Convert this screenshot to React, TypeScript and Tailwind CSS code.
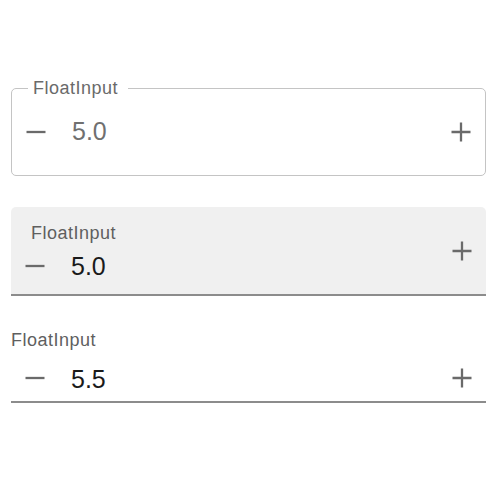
const font = { fontFamily: '"Liberation Sans", Arial, sans-serif' };

function MinusIcon() {
  return (
    <svg width="22" height="22" viewBox="0 0 22 22" className="shrink-0">
      <path d="M1.5 11h19" stroke="#6a6a6a" strokeWidth="2.3" />
    </svg>
  );
}

function PlusIcon() {
  return (
    <svg width="22" height="22" viewBox="0 0 22 22" className="shrink-0">
      <path d="M1.5 11h19M11 1.5v19" stroke="#6a6a6a" strokeWidth="2.3" />
    </svg>
  );
}

export default function App() {
  return (
    <div className="w-[500px] h-[500px] bg-white px-[11px] pt-[88px]" style={font}>
      <div className="w-[475px]">
        {/* Outlined */}
        <div className="relative h-[88px] rounded-[5px] border border-[#c4c4c4] flex items-center px-[13px]">
          <span className="absolute left-[16px] -top-[12px] bg-white pl-[5px] pr-[10px] text-[18px] leading-[22px] tracking-[0.5px] text-[#6a6a6a]">
            FloatInput
          </span>
          <MinusIcon />
          <span className="ml-[25px] text-[25px] text-[#707070]">5.0</span>
          <div className="flex-1" />
          <PlusIcon />
        </div>

        {/* Filled */}
        <div className="mt-[31px] h-[89px] rounded-t-[5px] bg-[#f0f0f0] border-b-2 border-[#8c8c8c] flex items-center px-[13px]">
          <div className="flex flex-col self-stretch pt-[15px]">
            <span className="ml-[7px] text-[18px] leading-[22px] tracking-[0.5px] text-[#5f5f5f]">FloatInput</span>
            <div className="flex items-center mt-[8px]">
              <MinusIcon />
              <span className="ml-[25px] text-[25px] leading-[28px] text-[#1a1a1a]">5.0</span>
            </div>
          </div>
          <div className="flex-1" />
          <PlusIcon />
        </div>

        {/* Standard */}
        <div className="mt-[33px]">
          <span className="block text-[18px] leading-[22px] tracking-[0.5px] text-[#5f5f5f]">FloatInput</span>
          <div className="mt-[16px] h-[36px] border-b-2 border-[#8c8c8c] flex items-start px-[13px]">
            <MinusIcon />
            <span className="ml-[25px] text-[25px] leading-[28px] -mt-[2px] text-[#1a1a1a]">5.5</span>
            <div className="flex-1" />
            <PlusIcon />
          </div>
        </div>
      </div>
    </div>
  );
}
